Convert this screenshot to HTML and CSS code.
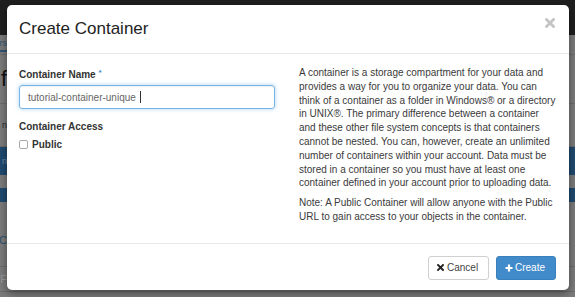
FILE: index.html
```html
<!DOCTYPE html>
<html>
<head>
<meta charset="utf-8">
<link rel="stylesheet" href="styles.css">
</head>
<body>
<div class="page">
  <div class="navbar"></div>
  <div class="row tabs"><div class="stub"><span class="tab">rs</span></div></div>
  <div class="row heading"><div class="stub"><span>f</span></div></div>
  <div class="row plain"><div class="stub"><span>n</span></div></div>
  <div class="row bar"><div class="stub"><span>ri</span></div></div>
  <div class="row bar thin"></div>
  <div class="row plain link"><div class="stub"><span>C</span></div></div>
  <div class="row plain faint"><div class="stub"><span>F</span></div></div>
</div>

<div class="modal">
  <div class="modal-header">
    <h4 class="modal-title">Create Container</h4>
    <svg class="close" width="10" height="10" viewBox="0 0 10 10"><path d="M1.5 1.5 L8.5 8.5 M8.5 1.5 L1.5 8.5" stroke="#c4c4c4" stroke-width="2.8" stroke-linecap="square"/></svg>
  </div>
  <div class="modal-body">
    <div class="form-col">
      <div class="label">Container Name <span class="req">*</span></div>
      <div class="input"><span class="value">tutorial-container-unique </span><span class="caret"></span></div>
      <div class="label access">Container Access</div>
      <div class="check-row"><span class="checkbox"></span><span class="check-label">Public</span></div>
    </div>
    <div class="help-col">
      <p>A container is a storage compartment for your data and provides a way for you to organize your data. You can think of a container as a folder in Windows&reg; or a directory in UNIX&reg;. The primary difference between a container and these other file system concepts is that containers cannot be nested. You can, however, create an unlimited number of containers within your account. Data must be stored in a container so you must have at least one container defined in your account prior to uploading data.</p>
      <p>Note: A Public Container will allow anyone with the Public URL to gain access to your objects in the container.</p>
    </div>
  </div>
  <div class="modal-footer">
    <button class="btn btn-default"><svg width="7" height="7" viewBox="0 0 7 7"><path d="M1 1 L6 6 M6 1 L1 6" stroke="#222" stroke-width="1.9" stroke-linecap="square"/></svg>Cancel</button>
    <button class="btn btn-primary"><svg width="8" height="8" viewBox="0 0 8 8"><path d="M4 0.5 V7.5 M0.5 4 H7.5" stroke="#fff" stroke-width="2.2"/></svg>Create</button>
  </div>
</div>
</body>
</html>
```
FILE: styles.css
```css
html, body {
  margin: 0;
  padding: 0;
}
body {
  width: 575px;
  height: 297px;
  overflow: hidden;
  background: #7b7b7b;
  font-family: "Liberation Sans", Arial, sans-serif;
  position: relative;
}
.page {
  display: flex;
  flex-direction: column;
}
.navbar {
  height: 35px;
  background: #1f1f1f;
}
.row {
  display: flex;
  align-items: center;
  border-bottom: 1px solid #6c6c6c;
}
.stub {
  width: 7px;
  display: flex;
  justify-content: flex-end;
  white-space: nowrap;
}
.tabs {
  height: 19px;
  font-size: 9px;
  color: #2f5574;
}
.tab {
  border-bottom: 2px solid #2f5574;
  padding-bottom: 2px;
}
.heading {
  height: 48px;
  font-size: 22px;
  color: #111;
}
.plain {
  height: 42px;
  font-size: 9px;
  color: #2a2a2a;
}
.bar {
  height: 28px;
  background: #1f4a6f;
  color: #6f8ca8;
  font-size: 9px;
  border-bottom: none;
}
.bar.thin {
  height: 14px;
  margin-top: 13px;
}
.row.bar + .row.plain {
  margin-top: 12px;
}
.link {
  color: #2a4f70;
  font-size: 11px;
  height: 52px;
}
.faint {
  color: #9a9a9a;
  font-size: 11px;
  height: 24px;
}

.modal {
  position: absolute;
  left: 7px;
  top: 5px;
  width: 562px;
  background: #fff;
  border-radius: 5px;
  box-shadow: 0 3px 8px rgba(0, 0, 0, 0.45);
  color: #333;
}
.modal-header {
  padding: 14px 14px 14px 12px;
  border-bottom: 1px solid #e8e8e8;
  display: flex;
  justify-content: space-between;
  align-items: flex-start;
}
.modal-title {
  margin: 0;
  font-size: 17px;
  line-height: 20px;
  font-weight: normal;
  color: #222;
}
.close {
  margin-top: -1px;
}
.modal-body {
  padding: 12px 12px 13px 12px;
  display: grid;
  grid-template-columns: 256px 258px;
  column-gap: 24px;
}
.form-col {
  display: flex;
  flex-direction: column;
  align-items: flex-start;
}
.label {
  font-size: 10px;
  line-height: 14px;
  font-weight: bold;
  color: #333;
}
.req {
  color: #3f8bd0;
  font-size: 8px;
  vertical-align: 3px;
}
.input {
  margin-top: 3px;
  box-sizing: border-box;
  width: 256px;
  height: 24px;
  border: 1px solid #79b4e6;
  border-radius: 3px;
  box-shadow: inset 0 1px 1px rgba(0, 0, 0, 0.06), 0 0 4px rgba(102, 175, 233, 0.55);
  padding: 0 8px;
  display: flex;
  align-items: center;
  font-size: 10px;
  color: #666;
}
.value {
  white-space: pre;
}
.caret {
  display: inline-block;
  width: 1px;
  height: 12px;
  background: #333;
  margin-left: 1px;
}
.access {
  margin-top: 11px;
}
.check-row {
  margin-top: 3px;
  display: flex;
  align-items: center;
  gap: 4px;
  height: 14px;
}
.checkbox {
  box-sizing: border-box;
  width: 9px;
  height: 9px;
  border: 1px solid #a9a9a9;
  border-radius: 2px;
  background: #fff;
}
.check-label {
  font-size: 10px;
  font-weight: bold;
  color: #333;
}
.help-col p {
  margin: 0 0 6px 0;
  font-size: 10px;
  line-height: 13.8px;
  color: #3a3a3a;
}
.modal-footer {
  border-top: 1px solid #e8e8e8;
  padding: 12px 13px 10px 12px;
  display: flex;
  justify-content: flex-end;
  gap: 7px;
}
.btn {
  box-sizing: border-box;
  height: 24px;
  font-family: "Liberation Sans", Arial, sans-serif;
  font-size: 10px;
  border-radius: 3px;
  padding: 0 8px;
  display: flex;
  align-items: center;
  gap: 3px;
  cursor: pointer;
}
.btn-default {
  background: #fff;
  border: 1px solid #d0d0d0;
  color: #444;
  width: 61px;
}
.btn-primary {
  background: #428bca;
  border: 1px solid #3a80bd;
  color: #fff;
  width: 60px;
  gap: 2px;
}
```
